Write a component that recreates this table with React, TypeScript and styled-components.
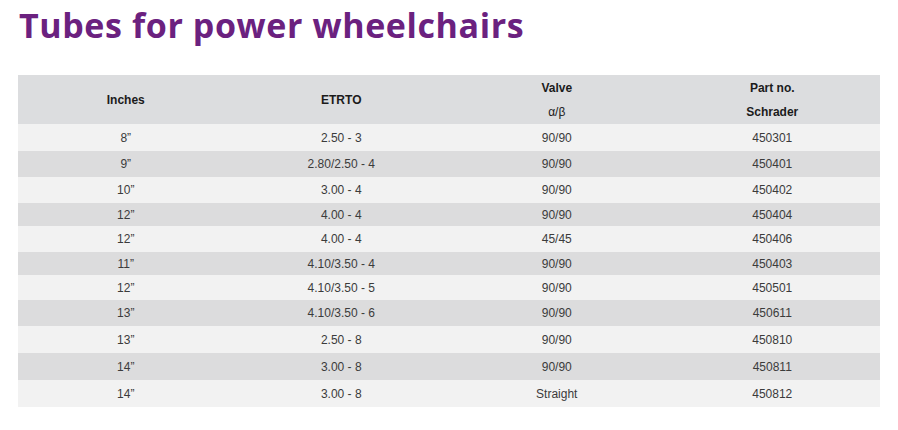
import React from "react";
import styled, { createGlobalStyle } from "styled-components";

const Global = createGlobalStyle`
  html, body { margin: 0; padding: 0; background: #ffffff; }
  body { font-family: "Liberation Sans", Arial, sans-serif; }
`;

const Page = styled.div`
  width: 898px;
  height: 430px;
  box-sizing: border-box;
  padding: 4px 18px 0 18px;
  display: flex;
  flex-direction: column;
`;

const Title = styled.h1`
  margin: 0 0 0 1px;
  font-family: "Open Sans", "Noto Sans", sans-serif;
  font-weight: 700;
  font-size: 34px;
  line-height: 42px;
  color: #6b217f;
  letter-spacing: 0.6px;
`;

const Table = styled.div`
  margin-top: 29px;
  width: 862px;
  display: flex;
  flex-direction: column;
`;

const Row = styled.div<{ $h: number; $bg: string }>`
  display: grid;
  grid-template-columns: repeat(4, 1fr);
  height: ${(p) => p.$h}px;
  background: ${(p) => p.$bg};
`;

const Cell = styled.div<{ $head?: boolean }>`
  display: flex;
  flex-direction: column;
  align-items: center;
  justify-content: center;
  font-size: 12px;
  color: ${(p) => (p.$head ? "#1b1b1b" : "#3b3b3b")};
  font-weight: ${(p) => (p.$head ? 700 : 400)};
`;

const Line = styled.div<{ $bold?: boolean }>`
  height: 24px;
  line-height: 24px;
  font-weight: ${(p) => (p.$bold ? 700 : 400)};
`;

const rows: [string, string, string, string, number][] = [
  ["8\u201D", "2.50 - 3", "90/90", "450301", 27],
  ["9\u201D", "2.80/2.50 - 4", "90/90", "450401", 26],
  ["10\u201D", "3.00 - 4", "90/90", "450402", 26],
  ["12\u201D", "4.00 - 4", "90/90", "450404", 23],
  ["12\u201D", "4.00 - 4", "45/45", "450406", 26],
  ["11\u201D", "4.10/3.50 - 4", "90/90", "450403", 23],
  ["12\u201D", "4.10/3.50 - 5", "90/90", "450501", 25],
  ["13\u201D", "4.10/3.50 - 6", "90/90", "450611", 26],
  ["13\u201D", "2.50 - 8", "90/90", "450810", 27],
  ["14\u201D", "3.00 - 8", "90/90", "450811", 27],
  ["14\u201D", "3.00 - 8", "Straight", "450812", 27],
];

export default function App() {
  return (
    <>
      <Global />
      <Page>
        <Title>Tubes for power wheelchairs</Title>
        <Table>
          <Row $h={49} $bg="#dcdddf">
            <Cell $head>Inches</Cell>
            <Cell $head>ETRTO</Cell>
            <Cell $head>
              <Line $bold>Valve</Line>
              <Line>α/β</Line>
            </Cell>
            <Cell $head>
              <Line $bold>Part no.</Line>
              <Line $bold>Schrader</Line>
            </Cell>
          </Row>
          {rows.map((r, i) => (
            <Row key={i} $h={r[4]} $bg={i % 2 === 0 ? "#f2f2f2" : "#dcdcdd"}>
              <Cell>{r[0]}</Cell>
              <Cell>{r[1]}</Cell>
              <Cell>{r[2]}</Cell>
              <Cell>{r[3]}</Cell>
            </Row>
          ))}
        </Table>
      </Page>
    </>
  );
}
